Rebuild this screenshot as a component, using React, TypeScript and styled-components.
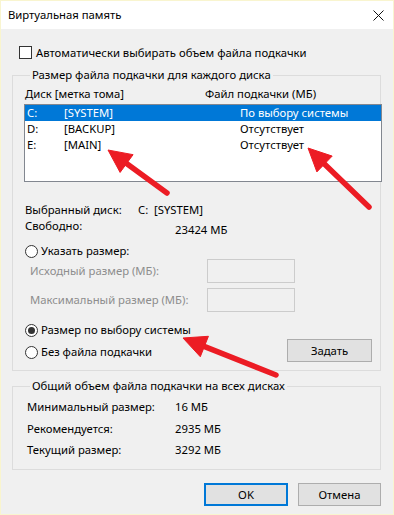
import React from 'react';
import styled, { createGlobalStyle } from 'styled-components';

const GlobalStyle = createGlobalStyle`
  html, body {
    margin: 0;
    padding: 0;
    background: #ffffff;
  }
  * {
    box-sizing: border-box;
  }
`;

const Window = styled.div`
  position: relative;
  width: 394px;
  height: 515px;
  border: 1px solid #f9f5cf;
  background: #f0f0f0;
  font-family: "Noto Sans", "Open Sans", sans-serif;
  font-size: 11.3px;
  color: #000;
  overflow: hidden;
`;

const TitleBar = styled.div`
  height: 28px;
  background: #ffffff;
  display: flex;
  align-items: center;
  justify-content: space-between;
  padding: 0 9px 0 7px;
  line-height: 16px;
`;

const Body = styled.div`
  padding: 0 12px 0 11px;
`;

const CheckRow = styled.div`
  margin-top: 17px;
  padding-left: 7px;
  height: 13px;
  display: flex;
  align-items: center;
  gap: 4px;
  line-height: 16px;
`;

const CheckBox = styled.span`
  width: 13px;
  height: 13px;
  border: 1px solid #333;
  background: #fff;
  flex: none;
`;

const Group = styled.fieldset<{ $top: number; $bottom: number }>`
  margin: ${(p) => p.$top}px 0 0 0;
  padding: 0 0 ${(p) => p.$bottom}px 11px;
  border: 1px solid #dcdcdc;
  min-width: 0;
`;

const Legend = styled.legend`
  margin-left: 6px;
  padding: 0 2px;
  line-height: 16px;
`;

const Header = styled.div`
  margin-top: 3px;
  padding-left: 1px;
  display: grid;
  grid-template-columns: 180px 1fr;
  line-height: 16px;
`;

const List = styled.div`
  margin: 2px -2px 0 0;
  height: 78px;
  border: 1px solid #828790;
  background: #fff;
`;

const ListRow = styled.div<{ $selected?: boolean }>`
  height: 16px;
  line-height: 15px;
  padding-left: 2px;
  display: grid;
  grid-template-columns: 37px 176px 1fr;
  background: ${(p) => (p.$selected ? '#0078d7' : 'transparent')};
  color: ${(p) => (p.$selected ? '#fff' : '#000')};
`;

const InfoGrid = styled.div`
  margin-top: 20px;
  padding-left: 1px;
  display: grid;
  grid-template-columns: 113px 1fr;
  line-height: 16px;
`;

const InfoValue = styled.span<{ $shift?: number }>`
  padding-left: ${(p) => p.$shift ?? 0}px;
  padding-top: ${(p) => (p.$shift ? 4 : 0)}px;
`;

const RadioRow = styled.div<{ $top: number }>`
  margin-top: ${(p) => p.$top}px;
  padding-left: 1px;
  height: 16px;
  display: flex;
  align-items: center;
  gap: 3px;
  line-height: 16px;
`;

const Radio = styled.span<{ $checked?: boolean }>`
  width: 13px;
  height: 13px;
  border-radius: 50%;
  border: 1px solid #333;
  background: #fff;
  flex: none;
  display: flex;
  align-items: center;
  justify-content: center;
  &::after {
    content: '';
    width: 7px;
    height: 7px;
    border-radius: 50%;
    background: ${(p) => (p.$checked ? '#333' : 'transparent')};
  }
`;

const FieldRow = styled.div<{ $top: number }>`
  margin-top: ${(p) => p.$top}px;
  padding-left: 6px;
  display: flex;
  align-items: center;
  line-height: 16px;
  color: #8d8d8d;
`;

const FieldLabel = styled.span`
  width: 177px;
`;

const FieldInput = styled.span`
  width: 88px;
  height: 24px;
  border: 1px solid #cccccc;
  background: #f0f0f0;
`;

const ChoiceArea = styled.div`
  margin-top: 10px;
  display: flex;
  justify-content: space-between;
  align-items: flex-end;
`;

const ChoiceColumn = styled.div`
  padding-bottom: 2px;
`;

const Button = styled.button<{ $primary?: boolean; $width: number }>`
  width: ${(p) => p.$width}px;
  height: 23px;
  border: ${(p) => (p.$primary ? '2px solid #0078d7' : '1px solid #adadad')};
  background: #e1e1e1;
  font-family: inherit;
  font-size: 11.3px;
  color: #000;
  padding: 0;
  line-height: 16px;
`;

const SetButton = styled(Button)`
  margin-right: 8px;
`;

const TotalsGrid = styled.div`
  margin-top: 5px;
  padding-left: 3px;
  display: grid;
  grid-template-columns: 148px 1fr;
  row-gap: 5.5px;
  line-height: 16px;
`;

const Footer = styled.div`
  margin-top: 13px;
  display: flex;
  justify-content: flex-end;
  gap: 10px;
`;

const Overlay = styled.svg`
  position: absolute;
  left: -1px;
  top: -1px;
  pointer-events: none;
`;

const CloseIcon = () => (
  <svg width="11" height="11" viewBox="0 0 11 11">
    <path d="M0.5 0.5 L10.5 10.5 M10.5 0.5 L0.5 10.5" stroke="#111" strokeWidth="1" fill="none" />
  </svg>
);

type Arrow = { x1: number; y1: number; x2: number; y2: number };

const arrows: Arrow[] = [
  { x1: 167, y1: 193, x2: 108, y2: 150 },
  { x1: 369, y1: 207, x2: 308, y2: 148 },
  { x1: 276, y1: 375, x2: 183, y2: 338 },
];

const RedArrow: React.FC<{ a: Arrow }> = ({ a }) => {
  const dx = a.x2 - a.x1;
  const dy = a.y2 - a.y1;
  const len = Math.hypot(dx, dy);
  const ux = dx / len;
  const uy = dy / len;
  const head = 23;
  const half = 11;
  const bx = a.x2 - ux * head;
  const by = a.y2 - uy * head;
  const pts = [
    `${a.x2},${a.y2}`,
    `${bx - uy * half},${by + ux * half}`,
    `${bx + uy * half},${by - ux * half}`,
  ].join(' ');
  return (
    <g fill="#ec1c24" stroke="#ec1c24">
      <line x1={a.x1} y1={a.y1} x2={bx + ux * 3} y2={by + uy * 3} strokeWidth="5.5" strokeLinecap="round" />
      <polygon points={pts} strokeWidth="1" strokeLinejoin="round" />
    </g>
  );
};

const drives = [
  { letter: 'C:', label: '[SYSTEM]', file: 'По выбору системы', selected: true },
  { letter: 'D:', label: '[BACKUP]', file: 'Отсутствует' },
  { letter: 'E:', label: '[MAIN]', file: 'Отсутствует' },
];

const totals = [
  ['Минимальный размер:', '16 МБ'],
  ['Рекомендуется:', '2935 МБ'],
  ['Текущий размер:', '3292 МБ'],
];

export default function App() {
  return (
    <>
      <GlobalStyle />
      <Window>
        <TitleBar>
          <span>Виртуальная память</span>
          <CloseIcon />
        </TitleBar>
        <Body>
          <CheckRow>
            <CheckBox />
            <span>Автоматически выбирать объем файла подкачки</span>
          </CheckRow>

          <Group $top={8} $bottom={8}>
            <Legend>Размер файла подкачки для каждого диска</Legend>
            <Header>
              <span>Диск [метка тома]</span>
              <span>Файл подкачки (МБ)</span>
            </Header>
            <List>
              {drives.map((d) => (
                <ListRow key={d.letter} $selected={d.selected}>
                  <span>{d.letter}</span>
                  <span>{d.label}</span>
                  <span>{d.file}</span>
                </ListRow>
              ))}
            </List>

            <InfoGrid>
              <span>Выбранный диск:</span>
              <InfoValue>C:&nbsp;&nbsp;[SYSTEM]</InfoValue>
              <span>Свободно:</span>
              <InfoValue $shift={37}>23424 МБ</InfoValue>
            </InfoGrid>

            <RadioRow $top={5}>
              <Radio />
              <span>Указать размер:</span>
            </RadioRow>
            <FieldRow $top={0}>
              <FieldLabel>Исходный размер (МБ):</FieldLabel>
              <FieldInput />
            </FieldRow>
            <FieldRow $top={5}>
              <FieldLabel>Максимальный размер (МБ):</FieldLabel>
              <FieldInput />
            </FieldRow>

            <ChoiceArea>
              <ChoiceColumn>
                <RadioRow $top={0}>
                  <Radio $checked />
                  <span>Размер по выбору системы</span>
                </RadioRow>
                <RadioRow $top={6}>
                  <Radio />
                  <span>Без файла подкачки</span>
                </RadioRow>
              </ChoiceColumn>
              <SetButton $width={85}>Задать</SetButton>
            </ChoiceArea>
          </Group>

          <Group $top={7} $bottom={11}>
            <Legend>Общий объем файла подкачки на всех дисках</Legend>
            <TotalsGrid>
              {totals.map(([k, v]) => (
                <React.Fragment key={k}>
                  <span>{k}</span>
                  <span>{v}</span>
                </React.Fragment>
              ))}
            </TotalsGrid>
          </Group>

          <Footer>
            <Button $primary $width={84}>OK</Button>
            <Button $width={83}>Отмена</Button>
          </Footer>
        </Body>

        <Overlay width="394" height="515" viewBox="0 0 394 515">
          {arrows.map((a, i) => (
            <RedArrow key={i} a={a} />
          ))}
        </Overlay>
      </Window>
    </>
  );
}
